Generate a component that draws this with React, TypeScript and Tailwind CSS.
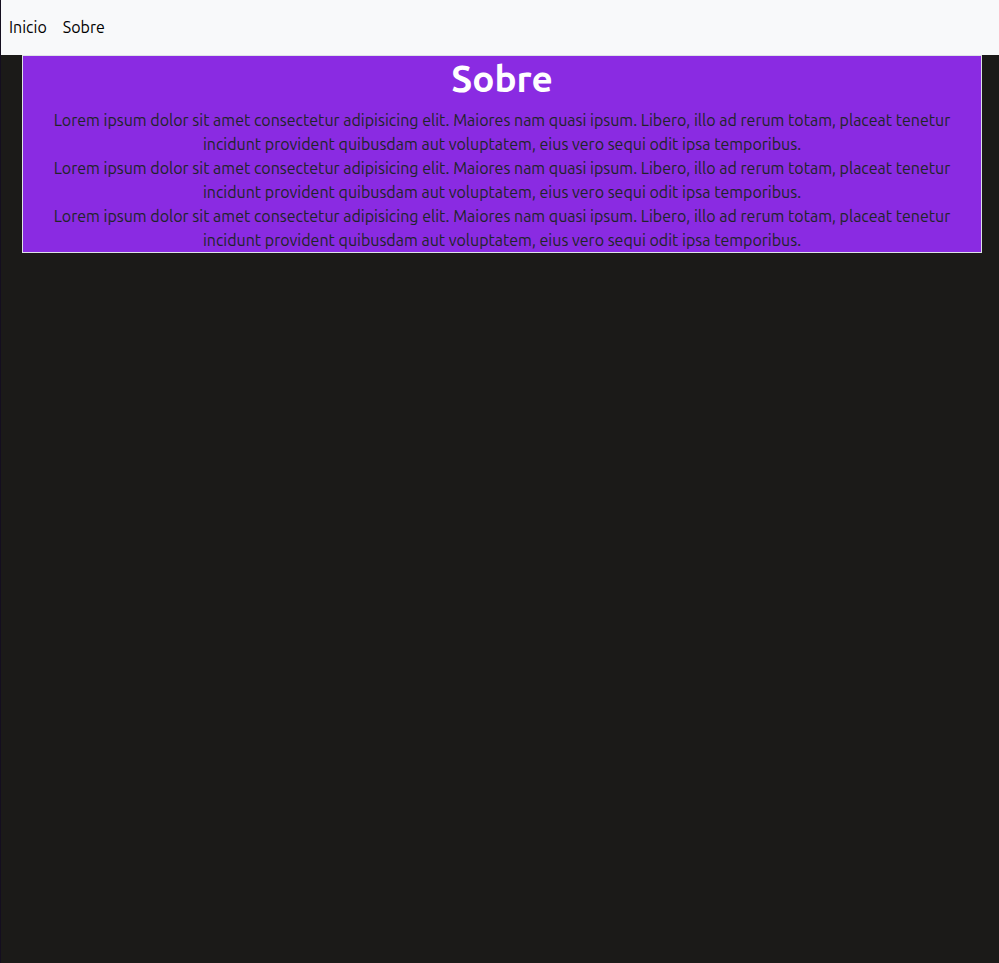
const lorem =
  "Lorem ipsum dolor sit amet consectetur adipisicing elit. Maiores nam quasi ipsum. Libero, illo ad rerum totam, placeat tenetur incidunt provident quibusdam aut voluptatem, eius vero sequi odit ipsa temporibus.";

export default function App() {
  return (
    <div className="min-h-screen border-l border-[#140e1f] bg-[#1b1a18] font-[Ubuntu,'Noto_Sans',sans-serif] text-base text-[#212529]">
      <nav className="flex items-center bg-[#f8f9fa] pt-[15px] pb-4 text-black">
        <a href="#inicio" className="px-2">Inicio</a>
        <a href="#sobre" className="px-2">Sobre</a>
      </nav>
      <main id="sobre" className="mr-[17px] ml-[21px] border border-[#dee2e6] bg-[#8a2be2] px-3 text-center">
        <h1 className="mb-1.5 text-[37px] leading-[46px] font-semibold text-white">Sobre</h1>
        <p>{lorem}</p>
        <p>{lorem}</p>
        <p>{lorem}</p>
      </main>
    </div>
  );
}
